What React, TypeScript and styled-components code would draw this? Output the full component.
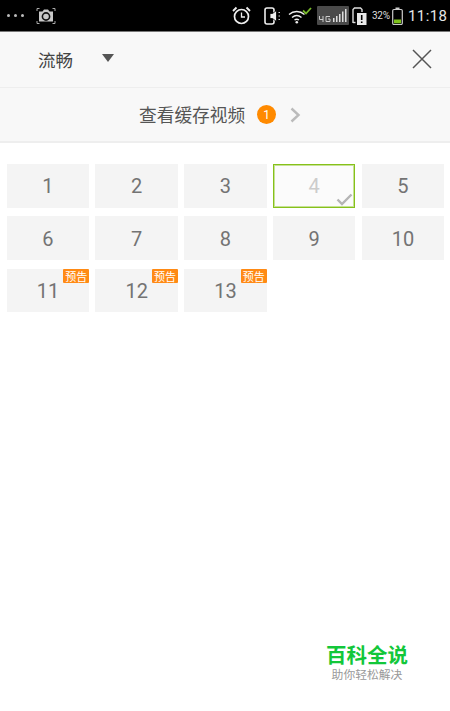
import React from "react";
import styled, { createGlobalStyle } from "styled-components";

const Global = createGlobalStyle`
  html, body { margin: 0; padding: 0; background: #fff; }
  * { box-sizing: border-box; }
  body { font-family: Roboto, "Noto Sans CJK SC", sans-serif; }
`;

const Page = styled.div`
  position: relative;
  width: 450px;
  height: 711px;
  overflow: hidden;
  background: #fff;
`;

const StatusBar = styled.div`
  height: 32px;
  background: #000;
  border-bottom: 1px solid #777;
  display: flex;
  align-items: center;
  color: #e8e8e8;
`;

const Dots = styled.div`
  display: flex;
  gap: 4px;
  margin-left: 7px;
  span {
    width: 3px;
    height: 3px;
    border-radius: 50%;
    background: #bbb;
  }
`;

const StatusIcon = styled.svg<{ $left: number }>`
  display: block;
  flex-shrink: 0;
  margin-left: ${(p) => p.$left}px;
`;

const Percent = styled.span`
  font-size: 10px;
  width: 18px;
  margin-left: 5px;
  letter-spacing: -0.3px;
  white-space: nowrap;
  color: #ddd;
`;

const Clock = styled.span`
  font-size: 15px;
  letter-spacing: 0.4px;
  margin-left: 5px;
  white-space: nowrap;
  color: #e6e6e6;
`;

const Header = styled.div`
  height: 56px;
  background: #f8f8f8;
  border-bottom: 1px solid #eeeeee;
  display: flex;
  align-items: center;
  padding: 0 18px 0 38px;
`;

const Quality = styled.span`
  font-size: 17.5px;
  color: #444;
  font-family: "Noto Sans CJK SC", sans-serif;
`;

const Caret = styled.span`
  width: 0;
  height: 0;
  margin-left: 29px;
  margin-top: -3px;
  border-left: 6.5px solid transparent;
  border-right: 6.5px solid transparent;
  border-top: 8px solid #555;
`;

const Close = styled.svg`
  margin-left: auto;
  margin-top: -1px;
  display: block;
`;

const CacheLink = styled.div`
  height: 55px;
  background: #f8f8f8;
  border-bottom: 2px solid #eeeeee;
  display: flex;
  align-items: center;
  padding-left: 139px;
`;

const CacheText = styled.span`
  font-size: 17.7px;
  margin-top: -2px;
  color: #555;
  white-space: nowrap;
  font-family: "Noto Sans CJK SC", sans-serif;
`;

const CountBadge = styled.span`
  width: 19px;
  height: 19px;
  margin-left: 12px;
  border-radius: 50%;
  background: #ff8a00;
  color: #fff;
  font-size: 12px;
  display: flex;
  align-items: center;
  justify-content: center;
`;

const Chevron = styled.svg`
  display: block;
  margin-left: 14px;
`;

const Grid = styled.div`
  display: grid;
  grid-template-columns: repeat(5, 82.5px);
  grid-auto-rows: 43.7px;
  column-gap: 6.25px;
  row-gap: 8.6px;
  padding: 21px 0 0 6.7px;
`;

const Cell = styled.div<{ $active?: boolean }>`
  position: relative;
  display: flex;
  align-items: center;
  justify-content: center;
  font-size: 20px;
  padding-top: 1px;
  color: ${(p) => (p.$active ? "#cccccc" : "#737373")};
  background: ${(p) => (p.$active ? "#fbfbfb" : "#f4f4f4")};
  border: ${(p) => (p.$active ? "1px solid #86c11a" : "none")};
  box-shadow: ${(p) => (p.$active ? "inset 0 0 0 1px rgba(134, 193, 26, 0.45)" : "none")};
`;

const Preview = styled.span`
  position: absolute;
  top: 0;
  right: 0;
  width: 26px;
  height: 14px;
  border-radius: 1px;
  background: #ff8a14;
  color: #fff;
  font-size: 11px;
  line-height: 14px;
  text-align: center;
  font-family: "Noto Sans CJK SC", sans-serif;
`;

const Check = styled.svg`
  position: absolute;
  right: 1px;
  bottom: 1px;
  display: block;
`;

const Watermark = styled.div`
  position: absolute;
  left: 325px;
  top: 643px;
  width: 84px;
  text-align: center;
  font-family: "Noto Sans CJK SC", sans-serif;
`;

const WatermarkTitle = styled.div`
  font-size: 20.5px;
  line-height: 22px;
  font-weight: 700;
  color: #12c73a;
  white-space: nowrap;
`;

const WatermarkSub = styled.div`
  font-size: 11.8px;
  line-height: 15px;
  margin-top: 1px;
  color: #999;
  white-space: nowrap;
`;

const episodes = Array.from({ length: 13 }, (_, i) => i + 1);

export default function App() {
  return (
    <Page>
      <Global />
      <StatusBar>
        <Dots>
          <span />
          <span />
          <span />
        </Dots>
        <StatusIcon $left={12} width="20" height="18" viewBox="0 0 20 18" fill="none">
          <path d="M1 4V1.5H3.5M16.5 1.5H19V4M1 14V16.5H3.5M16.5 16.5H19V14" stroke="#aaa" />
          <path d="M3 4.5H6.5L8 2.5H12L13.5 4.5H17V14.5H3Z" fill="#c8c8c8" />
          <circle cx="10" cy="9.5" r="3.6" fill="#c8c8c8" stroke="#111" strokeWidth="1.6" />
        </StatusIcon>
        <StatusIcon $left={176} width="19" height="20" viewBox="0 0 19 20" fill="none">
          <circle cx="9.5" cy="10.5" r="7" stroke="#eee" strokeWidth="1.7" />
          <path d="M9.5 6.5V11H13" stroke="#eee" strokeWidth="1.3" />
          <path d="M1 5L4.5 1.5M18 5L14.5 1.5" stroke="#eee" strokeWidth="1.8" />
        </StatusIcon>
        <StatusIcon $left={13} width="18" height="18" viewBox="0 0 18 18" fill="none">
          <rect x="1" y="1" width="9" height="16" rx="2" stroke="#eee" strokeWidth="1.6" />
          <path d="M6 6.5H8.5L12.5 3.5V14.500L8.500 11.500H6Z" fill="#eee" stroke="#000" strokeWidth="0.8" />
          <path d="M14.500 5.500H16M14.500 9H16M14.500 12.500H16" stroke="#ccc" />
        </StatusIcon>
        <StatusIcon $left={6} width="24" height="17" viewBox="0 0 24 17" fill="none">
          <path d="M1 7.500C5.500 3.500 12 3.500 16.500 7.500" stroke="#eee" strokeWidth="1.400" />
          <path d="M4 10.500C7 8 10.500 8 13.500 10.500" stroke="#eee" strokeWidth="1.400" />
          <path d="M6.500 13C8 12 9.500 12 11 13" stroke="#eee" strokeWidth="1.300" />
          <circle cx="8.800" cy="15.200" r="1.300" fill="#eee" />
          <path d="M15 3.500L18 6.500L23 1" stroke="#77b82a" strokeWidth="1.800" />
        </StatusIcon>
        <StatusIcon $left={5} width="32" height="19" viewBox="0 0 32 19" fill="none">
          <rect width="32" height="19" rx="1" fill="#4a4a4a" />
          <path d="M2.500 10V13.500H6M6 10V16M13 10.500H9V15.500H13V13H11" stroke="#ccc" strokeWidth="1" />
          <path d="M16 12H17.500V16H16ZM19 10H20.500V16H19ZM22 8H23.500V16H22ZM25 5.500H26.500V16H25ZM28 3H29.500V16H28Z" fill="#ddd" />
        </StatusIcon>
        <StatusIcon $left={3} width="15" height="18" viewBox="0 0 15 18" fill="none">
          <path d="M1 16V2.500L2.500 1H8.500L10 2.500V5" stroke="#ddd" strokeWidth="1.400" />
          <path d="M1 15.500H3.500" stroke="#ddd" strokeWidth="1.400" />
          <rect x="5" y="6" width="9.500" height="12" fill="#e8e8e8" />
          <path d="M9.700 8V13M9.700 14.500V16" stroke="#000" strokeWidth="1.600" />
        </StatusIcon>
        <Percent>32%</Percent>
        <StatusIcon $left={2} width="11" height="18" viewBox="0 0 11 18" fill="none">
          <rect x="0.700" y="2.500" width="9.600" height="15" rx="1.200" stroke="#ccc" strokeWidth="1.200" />
          <rect x="3.500" y="0.500" width="4" height="2" fill="#ccc" />
          <rect x="2" y="12.500" width="7" height="3.800" fill="#7fc31c" />
        </StatusIcon>
        <Clock>11:18</Clock>
      </StatusBar>
      <Header>
        <Quality>流畅</Quality>
        <Caret />
        <Close width="20" height="20" viewBox="0 0 20 20" fill="none">
          <path d="M1 1L19 19M19 1L1 19" stroke="#555" strokeWidth="1.500" />
        </Close>
      </Header>
      <CacheLink>
        <CacheText>查看缓存视频</CacheText>
        <CountBadge>1</CountBadge>
        <Chevron width="11" height="16" viewBox="0 0 11 16" fill="none">
          <path d="M1.500 1.500L8.500 8L1.500 14.500" stroke="#bbbbbb" strokeWidth="2.400" />
        </Chevron>
      </CacheLink>
      <Grid>
        {episodes.map((n) => (
          <Cell key={n} $active={n === 4}>
            {n}
            {n > 10 && <Preview>预告</Preview>}
            {n === 4 && (
              <Check width="17" height="13" viewBox="0 0 17 13" fill="none">
                <path d="M1.500 6.500L6 11L15.500 1.500" stroke="#b5b5b5" strokeWidth="2.400" />
              </Check>
            )}
          </Cell>
        ))}
      </Grid>
      <Watermark>
        <WatermarkTitle>百科全说</WatermarkTitle>
        <WatermarkSub>助你轻松解决</WatermarkSub>
      </Watermark>
    </Page>
  );
}
